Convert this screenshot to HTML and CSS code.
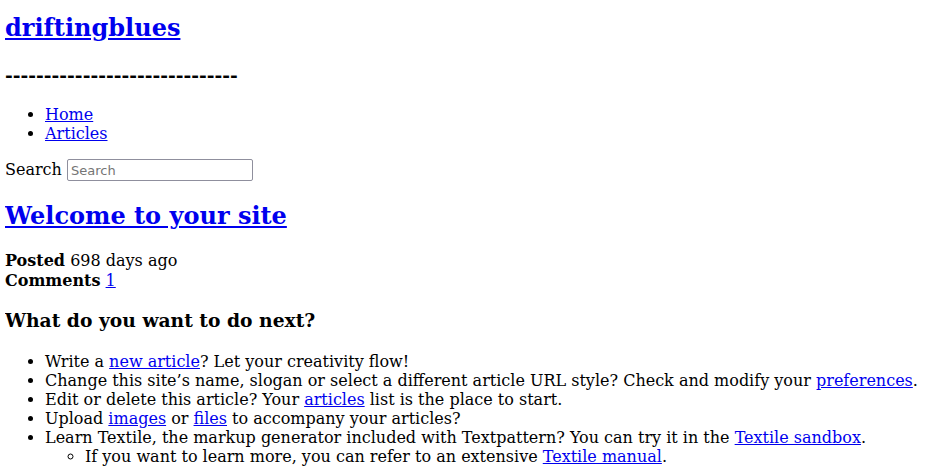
FILE: index.html
```html
<!DOCTYPE html>
<html lang="en">
<head>
<meta charset="utf-8">
<title>driftingblues</title>
<link rel="stylesheet" href="styles.css">
</head>
<body>
<header class="site-header">
<h1 class="site-title"><a href="#">driftingblues</a></h1>
<h3 class="site-slogan">------------------------------</h3>
</header>
<nav class="site-nav">
<ul>
<li><a href="#">Home</a></li>
<li><a href="#">Articles</a></li>
</ul>
</nav>
<form class="search-form">
<label>Search <input class="search-input" type="search" placeholder="Search"></label>
</form>
<main>
<article class="post">
<h2 class="post-title"><a href="#">Welcome to your site</a></h2>
<p class="post-meta"><strong>Posted</strong> 698 days ago<br><strong>Comments</strong> <a href="#">1</a></p>
<h3 class="post-heading">What do you want to do next?</h3>
<ul class="post-list">
<li>Write a <a href="#">new article</a>? Let your creativity flow!</li>
<li>Change this site’s name, slogan or select a different article URL style? Check and modify your <a href="#">preferences</a>.</li>
<li>Edit or delete this article? Your <a href="#">articles</a> list is the place to start.</li>
<li>Upload <a href="#">images</a> or <a href="#">files</a> to accompany your articles?</li>
<li>Learn Textile, the markup generator included with Textpattern? You can try it in the <a href="#">Textile sandbox</a>.
<ul>
<li>If you want to learn more, you can refer to an extensive <a href="#">Textile manual</a>.</li>
</ul>
</li>
</ul>
</article>
</main>
</body>
</html>
```

FILE: styles.css
```css
body {
  margin: 0 5px;
  font-family: "DejaVu Serif", serif;
  font-size: 16px;
  color: #000;
}
a {
  color: #0000ee;
}
.site-header {
  padding-top: 13px;
}
.site-title {
  font-size: 24px;
  margin: 0 0 22px;
}
.site-slogan {
  font-size: 18.72px;
  margin: 0 0 19px;
}
.site-nav ul {
  margin: 0 0 16px;
}
.search-input {
  box-sizing: border-box;
  width: 186px;
  height: 22px;
  padding: 0 3px;
  border: 1px solid #8f8f9d;
  border-radius: 2px;
  font-family: "DejaVu Sans", sans-serif;
  font-size: 13px;
}
.search-input::placeholder {
  color: #757575;
}
.post-title {
  font-size: 24px;
  margin: 20px 0 21px;
}
.post-meta {
  line-height: 20px;
  margin: 0 0 16px;
}
.post-heading {
  font-size: 18.72px;
  margin: 18px 0 21px;
}
.post-list {
  margin: 0;
}
```
